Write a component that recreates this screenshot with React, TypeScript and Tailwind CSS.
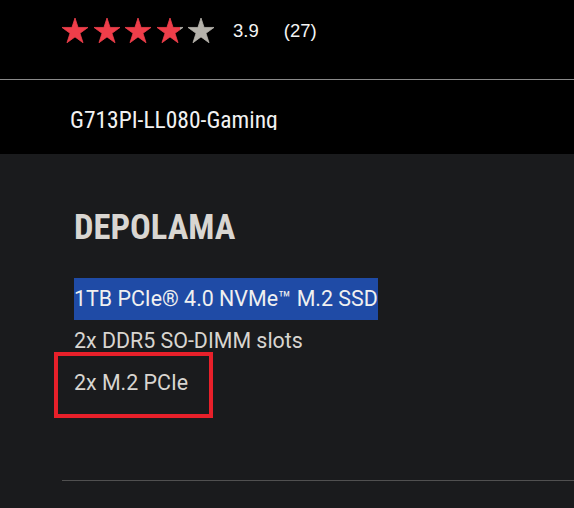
import React from "react";

const STAR = "13,0 16.07,9.45 26,9.45 17.96,15.28 21.03,24.73 13,18.89 4.97,24.73 8.04,15.28 0,9.45 9.93,9.45";

function Star({ fill, id }: { fill: number; id: string }) {
  return (
    <svg width="26" height="25" viewBox="0 0 26 25" className="shrink-0">
      <defs>
        <linearGradient id={id} x1="0" x2="1" y1="0" y2="0">
          <stop offset={fill} stopColor="#ef3e4a" />
          <stop offset={fill} stopColor="#b5b2ab" />
        </linearGradient>
      </defs>
      <polygon points={STAR} fill={`url(#${id})`} strokeLinejoin="round" stroke={`url(#${id})`} strokeWidth="0.8" />
    </svg>
  );
}

export default function App() {
  const stars = [1, 1, 1, 0.9, 0];
  return (
    <div className="w-[574px] h-[508px] overflow-hidden bg-[#1a1b1d] font-['Roboto',sans-serif]">
      <div className="bg-black h-[154px]">
        <div className="h-[80px] border-b border-[#8a8a8a] flex items-start pl-[62px] pt-[18px]">
          <div className="flex gap-[5.5px]">
            {stars.map((f, i) => (
              <Star key={i} fill={f} id={`s${i}`} />
            ))}
          </div>
          <div className="ml-[19px] mt-[1px] flex gap-[25px] text-[18.5px] leading-[24px] text-[#f4f4f4] font-['Liberation_Sans',sans-serif]">
            <span>3.9</span>
            <span>(27)</span>
          </div>
        </div>
        <div className="pl-[70px] pt-[29px]">
          <div className="h-[21px] overflow-hidden text-[23.5px] leading-[23px] text-[#f2f2f2] font-['Roboto_Condensed','Liberation_Sans_Narrow','Roboto',sans-serif] [font-stretch:condensed]">
            G713PI-LL080-Gaming
          </div>
        </div>
      </div>
      <div className="pl-[74px] pt-[53px]">
        <h2 className="text-[34.5px] leading-[40px] font-bold text-[#d9d6d1] font-['Roboto_Condensed','Liberation_Sans_Narrow','Roboto',sans-serif] [font-stretch:condensed]">
          DEPOLAMA
        </h2>
        <ul className="mt-[31px] text-[21.4px] leading-[42px] text-[#d8d5d0]">
          <li className="w-fit bg-[#1f4ba6] text-[#f0f0f0]">1TB PCIe® 4.0 NVMe™ M.2 SSD</li>
          <li>2x DDR5 SO-DIMM slots</li>
          <li className="relative w-fit">
            2x M.2 PCIe
            <div className="absolute left-[-20px] top-[-10px] w-[159px] h-[66px] border-4 border-[#e8202a]" />
          </li>
        </ul>
      </div>
      <div className="mt-[76px] ml-[62px] h-px bg-[#505050]" />
    </div>
  );
}
